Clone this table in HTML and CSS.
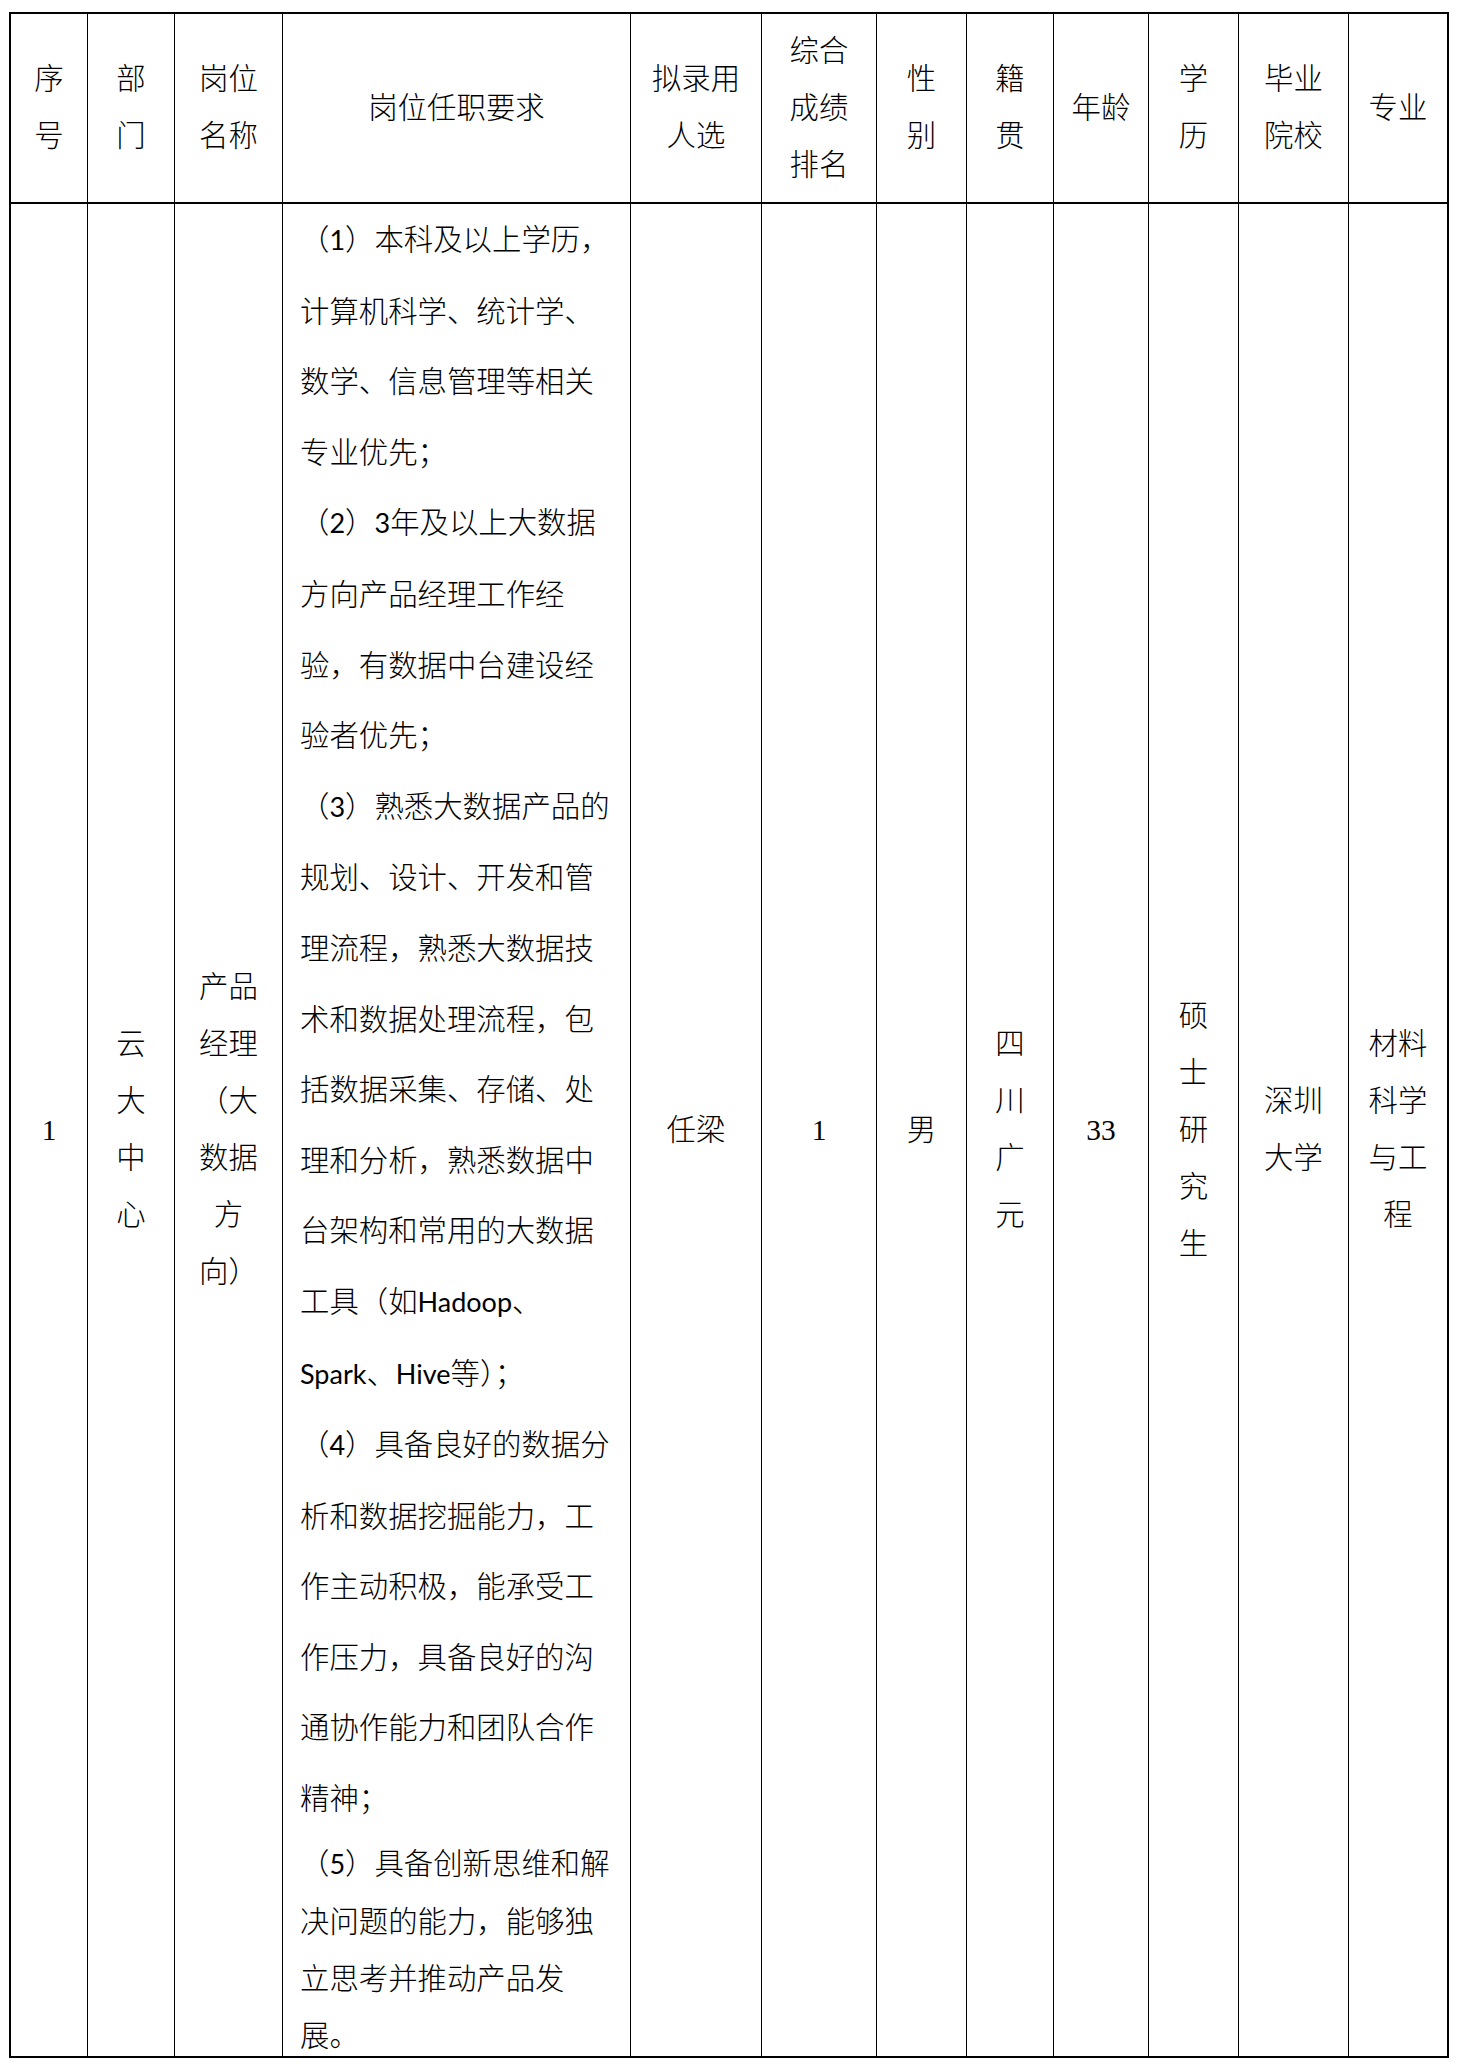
FILE: index.html
```html
<!DOCTYPE html>
<html lang="zh-CN">
<head>
<meta charset="utf-8">
<title>拟录用人员信息表</title>
<link rel="stylesheet" href="styles.css">
</head>
<body>
<div class="sheet">
  <div class="cell head">序<br>号</div>
  <div class="cell head">部<br>门</div>
  <div class="cell head">岗位<br>名称</div>
  <div class="cell head">岗位任职要求</div>
  <div class="cell head">拟录用<br>人选</div>
  <div class="cell head">综合<br>成绩<br>排名</div>
  <div class="cell head">性<br>别</div>
  <div class="cell head">籍<br>贯</div>
  <div class="cell head">年龄</div>
  <div class="cell head">学<br>历</div>
  <div class="cell head">毕业<br>院校</div>
  <div class="cell head last">专业</div>

  <div class="cell body">1</div>
  <div class="cell body">云<br>大<br>中<br>心</div>
  <div class="cell body">产品<br>经理<br>（大<br>数据<br>方<br>向）</div>
  <div class="cell body req">
    <div class="ln">（<span class="lat">1</span>）本科及以上学历，</div>
    <div class="ln">计算机科学、统计学、</div>
    <div class="ln">数学、信息管理等相关</div>
    <div class="ln">专业优先；</div>
    <div class="ln">（<span class="lat">2</span>）<span class="lat">3</span>年及以上大数据</div>
    <div class="ln">方向产品经理工作经</div>
    <div class="ln">验，有数据中台建设经</div>
    <div class="ln">验者优先；</div>
    <div class="ln">（<span class="lat">3</span>）熟悉大数据产品的</div>
    <div class="ln">规划、设计、开发和管</div>
    <div class="ln">理流程，熟悉大数据技</div>
    <div class="ln">术和数据处理流程，包</div>
    <div class="ln">括数据采集、存储、处</div>
    <div class="ln">理和分析，熟悉数据中</div>
    <div class="ln">台架构和常用的大数据</div>
    <div class="ln">工具（如<span class="lat">Hadoop</span>、</div>
    <div class="ln"><span class="lat">Spark</span>、<span class="lat">Hive</span>等）；</div>
    <div class="ln">（<span class="lat">4</span>）具备良好的数据分</div>
    <div class="ln">析和数据挖掘能力，工</div>
    <div class="ln">作主动积极，能承受工</div>
    <div class="ln">作压力，具备良好的沟</div>
    <div class="ln">通协作能力和团队合作</div>
    <div class="ln">精神；</div>
    <div class="ln tight">（<span class="lat">5</span>）具备创新思维和解</div>
    <div class="ln tight">决问题的能力，能够独</div>
    <div class="ln tight">立思考并推动产品发</div>
    <div class="ln tight">展。</div>
  </div>
  <div class="cell body">任梁</div>
  <div class="cell body">1</div>
  <div class="cell body">男</div>
  <div class="cell body">四<br>川<br>广<br>元</div>
  <div class="cell body">33</div>
  <div class="cell body">硕<br>士<br>研<br>究<br>生</div>
  <div class="cell body">深圳<br>大学</div>
  <div class="cell body last">材料<br>科学<br>与工<br>程</div>
</div>
</body>
</html>
```

FILE: styles.css
```css
html, body {
  margin: 0;
  padding: 0;
  background: #ffffff;
}

body {
  width: 1466px;
  min-height: 2069px;
}

.sheet {
  display: grid;
  grid-template-columns: 77px 87px 108px 348px 131px 115px 90px 87px 95px 90px 110px 100px;
  grid-template-rows: 190px 1854px;
  width: max-content;
  margin: 12px 0 0 9px;
  border-top: 2px solid #000;
  border-left: 2px solid #000;
  font-family: "Liberation Serif", "Noto Sans CJK SC", serif;
  font-size: 29.4px;
  font-weight: 300;
  color: #000;
}

.cell {
  box-sizing: border-box;
  display: flex;
  align-items: center;
  justify-content: center;
  text-align: center;
  line-height: 57px;
  border-right: 1px solid #000;
}

.cell.last {
  border-right-width: 2px;
}

.head,
.body {
  border-bottom: 2px solid #000;
}

.req {
  flex-direction: column;
  align-items: flex-start;
  justify-content: flex-start;
  text-align: left;
  padding-left: 17px;
  font-family: "Lato", "Noto Sans CJK SC", sans-serif;
}

.ln {
  line-height: 70.6px;
  white-space: nowrap;
}

.ln.tight {
  line-height: 57px;
}

.lat {
  font-size: 27px;
  font-weight: 400;
}
```
